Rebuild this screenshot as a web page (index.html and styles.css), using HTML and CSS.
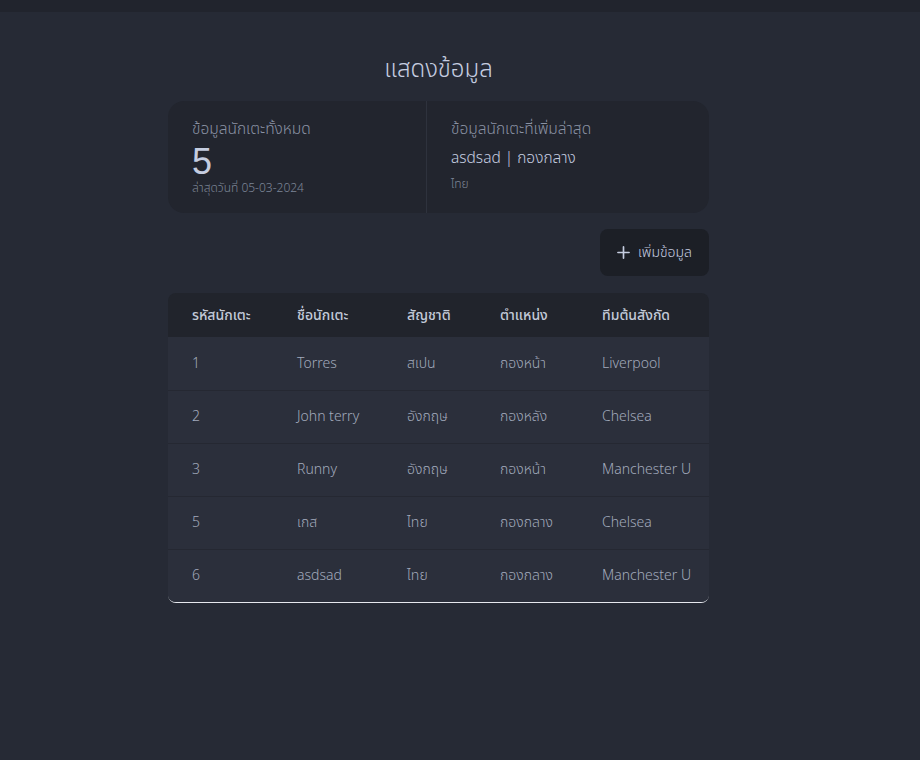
FILE: index.html
```html
<!DOCTYPE html>
<html lang="th">
<head>
<meta charset="utf-8">
<title>แสดงข้อมูล</title>
<link rel="stylesheet" href="styles.css">
</head>
<body>
<div class="topbar"></div>
<main class="page">
  <h1 class="title">แสดงข้อมูล</h1>
  <section class="stats">
    <div class="stat">
      <div class="stat-label">ข้อมูลนักเตะทั้งหมด</div>
      <div class="stat-value">5</div>
      <div class="stat-sub">ล่าสุดวันที่ 05-03-2024</div>
    </div>
    <div class="stat">
      <div class="stat-label">ข้อมูลนักเตะที่เพิ่มล่าสุด</div>
      <div class="stat-name">asdsad | กองกลาง</div>
      <div class="stat-sub">ไทย</div>
    </div>
  </section>
  <div class="actions">
    <button class="add-btn" type="button">
      <svg width="13" height="13" viewBox="0 0 14 14"><path d="M7 1v12M1 7h12" stroke="currentColor" stroke-width="1.8" stroke-linecap="round"/></svg>
      <span>เพิ่มข้อมูล</span>
    </button>
  </div>
  <div class="table-wrap">
    <table class="players">
      <thead>
        <tr><th>รหัสนักเตะ</th><th>ชื่อนักเตะ</th><th>สัญชาติ</th><th>ตำแหน่ง</th><th>ทีมต้นสังกัด</th></tr>
      </thead>
      <tbody>
        <tr><td>1</td><td>Torres</td><td>สเปน</td><td>กองหน้า</td><td>Liverpool</td></tr>
        <tr><td>2</td><td>John terry</td><td>อังกฤษ</td><td>กองหลัง</td><td>Chelsea</td></tr>
        <tr><td>3</td><td>Runny</td><td>อังกฤษ</td><td>กองหน้า</td><td>Manchester U</td></tr>
        <tr><td>5</td><td>เกส</td><td>ไทย</td><td>กองกลาง</td><td>Chelsea</td></tr>
        <tr><td>6</td><td>asdsad</td><td>ไทย</td><td>กองกลาง</td><td>Manchester U</td></tr>
      </tbody>
    </table>
  </div>
</main>
</body>
</html>
```

FILE: styles.css
```css
* { box-sizing: border-box; }
html, body {
  margin: 0;
  padding: 0;
  background: #262a35;
  color: #c3cad8;
  font-family: "Noto Sans Thai", "Noto Sans", "Open Sans", sans-serif;
  min-height: 760px;
}
.topbar {
  height: 12px;
  background: #21242d;
}
.page {
  width: 541px;
  margin: 0 0 0 168px;
  padding-top: 43px;
  display: flex;
  flex-direction: column;
}
.title {
  margin: 0;
  text-align: center;
  font-size: 24px;
  font-weight: 300;
  line-height: 30px;
  color: #c5cde0;
}
.stats {
  margin-top: 16px;
  height: 112px;
  display: grid;
  grid-template-columns: 258px 1fr;
  background: #22252e;
  border-radius: 16px;
}
.stat {
  padding: 18px 24px 0;
  display: flex;
  flex-direction: column;
}
.stat + .stat {
  border-left: 1px solid #2e323d;
}
.stat-label {
  font-size: 15.5px;
  font-weight: 300;
  line-height: 22px;
  color: #8a92a4;
}
.stat-value {
  margin-top: 3px;
  font-family: "Liberation Sans", sans-serif;
  font-size: 36px;
  line-height: 36px;
  font-weight: 400;
  color: #c5cde0;
}
.stat-name {
  font-size: 15.5px;
  line-height: 22px;
  margin-top: 7px;
  font-weight: 300;
  color: #c5cde0;
}
.stat-sub {
  font-size: 12px;
  line-height: 16px;
  color: #7d8597;
  font-weight: 300;
}
.stat-name + .stat-sub { margin-top: 6px; }
.actions {
  display: flex;
  justify-content: flex-end;
  margin-top: 16px;
}
.add-btn {
  height: 47px;
  width: 109px;
  border: none;
  border-radius: 8px;
  background: #1c1f26;
  color: #c5cde0;
  font-family: inherit;
  font-size: 14px;
  font-weight: 300;
  display: flex;
  align-items: center;
  justify-content: center;
  gap: 8px;
  padding: 0;
}
.table-wrap {
  margin-top: 17px;
  border-radius: 8px;
  overflow: hidden;
  border-bottom: 1px solid #e6e8ee;
}
.players {
  width: 100%;
  border-collapse: collapse;
  font-size: 14px;
}
.players th {
  background: #21242c;
  height: 44px;
  text-align: left;
  font-weight: 500;
  color: #c3cad8;
  padding: 0 0 0 24px;
}
.players td {
  background: #2b2f3b;
  height: 53px;
  padding: 0 0 0 24px;
  color: #a2aabb;
  font-weight: 300;
  border-top: 1px solid #252832;
}
.players tbody tr:first-child td { border-top: none; }
.players th:nth-child(1) { width: 105px; }
.players th:nth-child(2) { width: 110px; }
.players th:nth-child(3) { width: 93px; }
.players th:nth-child(4) { width: 102px; }
```
